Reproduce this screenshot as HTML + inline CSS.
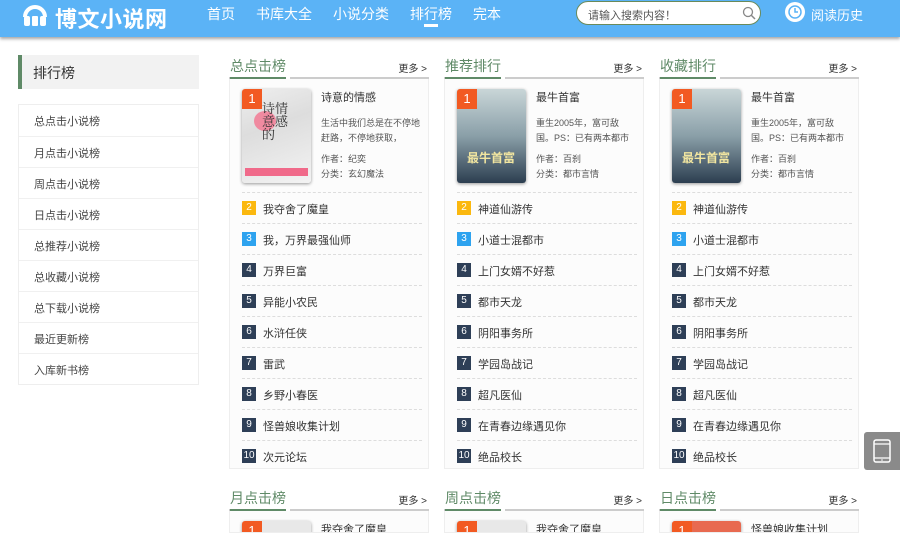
<!DOCTYPE html>
<html><head><meta charset="utf-8"><style>
*{margin:0;padding:0;box-sizing:border-box}
html,body{width:900px;height:534px;overflow:hidden}
body{background:#fff;font-family:"Liberation Sans","Noto Sans CJK SC",sans-serif;color:#333;position:relative}
.hd{position:absolute;left:0;top:0;width:900px;height:37px;background:#5bb3f6;box-shadow:0 2px 3px rgba(0,0,0,.35)}
.logo{position:absolute;left:55px;top:2px;color:#fff;font-size:22px;font-weight:bold;letter-spacing:0.5px}
.nav{position:absolute;top:4px;color:#fff;font-size:14px}
.srch{position:absolute;left:576px;top:1px;width:185px;height:24px;background:#fff;border-radius:12px;border:1px solid #6a8a5a;font-size:11px;color:#555;padding:5px 0 0 11px}
.side-t{position:absolute;left:18px;top:55px;width:181px;height:34px;background:#f2f2f2;border-left:4px solid #5f8a67;font-size:14px;padding:8px 0 0 11px}
.sl{position:absolute;left:18px;top:104px;width:181px;border:1px solid #eee}
.sl div{height:31px;border-top:1px solid #f0f0f0;font-size:11px;padding:8px 0 0 15px;color:#444}
.sl div:first-child{border-top:0}
.col{position:absolute;width:200px}
.ct{height:23px;border-bottom:2px solid #ccc;position:relative}
.ct b{font-weight:normal;font-size:14px;color:#5f8a67;position:absolute;left:1px;top:0;height:23px;border-bottom:2px solid #5f8a67;width:57px;margin-bottom:-2px}
.ct i{font-style:normal;font-size:10px;position:absolute;right:2px;top:4px;color:#333}
.ct:after{content:"";position:absolute;left:57px;bottom:-2px;width:4px;height:2px;background:#fff}
.box{border:1px solid #eee;border-top:0;background:#fcfcfc;height:390px;position:relative;overflow:hidden}
.box.s{height:22px}
.cv{position:absolute;left:12px;top:10px;width:69px;height:94px;border-radius:3px;box-shadow:0 1px 3px rgba(0,0,0,.4);overflow:hidden}
.b1{position:absolute;left:0;top:0;width:20px;height:20px;background:#f25a22;color:#fff;font-size:13px;text-align:center;line-height:20px}
.inf{position:absolute;left:91px;top:12px;font-size:9px;color:#555;line-height:15px;width:100px}
.inf .n{font-size:11px;color:#333;margin-bottom:10px}
.row{position:absolute;left:12px;width:180px;height:31px;border-top:1px dashed #ddd;font-size:11px;color:#333}
.row span{position:absolute;left:0;top:8px;width:14px;height:14px;background:#2e3f57;color:#fff;font-size:10px;text-align:center;line-height:14px}
.row em{font-style:normal;position:absolute;left:21px;top:8px}
.float{position:absolute;left:864px;top:432px;width:36px;height:38px;background:#8a8a8a;border-radius:3px 0 0 3px}
</style></head><body>
<div class="hd">
<svg style="position:absolute;left:22px;top:3px" width="26" height="24" viewBox="0 0 26 24"><path d="M3 14 A10 10 0 0 1 23 14" fill="none" stroke="#fff" stroke-width="4"/><rect x="2" y="13" width="6" height="10" rx="2" fill="#fff"/><rect x="18" y="13" width="6" height="10" rx="2" fill="#fff"/><rect x="10" y="13" width="6" height="10" rx="1" fill="#fff"/></svg>
<div class="logo">博文小说网</div>
<div class="nav" style="left:207px">首页</div>
<div class="nav" style="left:256px">书库大全</div>
<div class="nav" style="left:333px">小说分类</div>
<div class="nav" style="left:410px">排行榜</div>
<div style="position:absolute;left:424px;top:24px;width:14px;height:3px;background:#fff"></div>
<div class="nav" style="left:473px">完本</div>
<div class="srch">请输入搜索内容！<svg style="position:absolute;right:4px;top:4px" width="14" height="14"><circle cx="6" cy="6" r="4.5" fill="none" stroke="#888" stroke-width="1.3"/><path d="M9 9l4 4" stroke="#888" stroke-width="1.5"/></svg></div>
<svg style="position:absolute;left:784px;top:1px" width="22" height="22"><circle cx="11" cy="11" r="10" fill="#fff"/><circle cx="11" cy="11" r="6" fill="none" stroke="#5bb3f6" stroke-width="1.5"/><path d="M11 7v4h3" fill="none" stroke="#5bb3f6" stroke-width="1.5"/></svg>
<div class="nav" style="left:811px;font-size:13px;top:5px">阅读历史</div>
</div>
<div class="side-t">排行榜</div>
<div class="sl"><div>总点击小说榜</div><div>月点击小说榜</div><div>周点击小说榜</div><div>日点击小说榜</div><div>总推荐小说榜</div><div>总收藏小说榜</div><div>总下载小说榜</div><div>最近更新榜</div><div>入库新书榜</div></div>

<div class="col" style="left:229px;top:56px">
<div class="ct"><b>总点击榜</b><i>更多 &gt;</i></div>
<div class="box">
<div class="cv" style="background:linear-gradient(160deg,#eee,#ddd 40%,#f3f3f3);"><div style="position:absolute;left:12px;top:22px;width:22px;height:20px;border-radius:50%;background:#f08aa0"></div><div style="position:absolute;left:20px;top:12px;font-size:13px;color:#333;width:30px;line-height:13px;font-family:'Noto Serif CJK SC',serif">诗情意感的</div><div style="position:absolute;left:3px;bottom:7px;width:63px;height:8px;background:#f06a8a"></div><div class="b1">1</div></div>
<div class="inf"><div class="n">诗意的情感</div>生活中我们总是在不停地赶路，不停地获取，<div style="margin-top:6px">作者：纪奕<br>分类：玄幻魔法</div></div>
<div class="row" style="top:113px"><span style="background:#fbb80f">2</span><em>我夺舍了魔皇</em></div>
<div class="row" style="top:144px"><span style="background:#2ea3ef">3</span><em>我，万界最强仙师</em></div>
<div class="row" style="top:175px"><span>4</span><em>万界巨富</em></div>
<div class="row" style="top:206px"><span>5</span><em>异能小农民</em></div>
<div class="row" style="top:237px"><span>6</span><em>水浒任侠</em></div>
<div class="row" style="top:268px"><span>7</span><em>雷武</em></div>
<div class="row" style="top:299px"><span>8</span><em>乡野小春医</em></div>
<div class="row" style="top:330px"><span>9</span><em>怪兽娘收集计划</em></div>
<div class="row" style="top:361px"><span>10</span><em>次元论坛</em></div>
</div></div>

<div class="col" style="left:444px;top:56px">
<div class="ct"><b>推荐排行</b><i>更多 &gt;</i></div>
<div class="box">
<div class="cv" style="background:linear-gradient(180deg,#c9d6d8,#8a9fa8 50%,#2c3e50)"><div style="position:absolute;left:10px;top:60px;color:#f2e6a0;font-size:12px;font-weight:bold">最牛首富</div><div class="b1">1</div></div>
<div class="inf"><div class="n">最牛首富</div>重生2005年，富可敌国。PS：已有两本都市<div style="margin-top:6px">作者：百刹<br>分类：都市言情</div></div>
<div class="row" style="top:113px"><span style="background:#fbb80f">2</span><em>神道仙游传</em></div>
<div class="row" style="top:144px"><span style="background:#2ea3ef">3</span><em>小道士混都市</em></div>
<div class="row" style="top:175px"><span>4</span><em>上门女婿不好惹</em></div>
<div class="row" style="top:206px"><span>5</span><em>都市天龙</em></div>
<div class="row" style="top:237px"><span>6</span><em>阴阳事务所</em></div>
<div class="row" style="top:268px"><span>7</span><em>学园岛战记</em></div>
<div class="row" style="top:299px"><span>8</span><em>超凡医仙</em></div>
<div class="row" style="top:330px"><span>9</span><em>在青春边缘遇见你</em></div>
<div class="row" style="top:361px"><span>10</span><em>绝品校长</em></div>
</div></div>

<div class="col" style="left:659px;top:56px">
<div class="ct"><b>收藏排行</b><i>更多 &gt;</i></div>
<div class="box">
<div class="cv" style="background:linear-gradient(180deg,#c9d6d8,#8a9fa8 50%,#2c3e50)"><div style="position:absolute;left:10px;top:60px;color:#f2e6a0;font-size:12px;font-weight:bold">最牛首富</div><div class="b1">1</div></div>
<div class="inf"><div class="n">最牛首富</div>重生2005年，富可敌国。PS：已有两本都市<div style="margin-top:6px">作者：百刹<br>分类：都市言情</div></div>
<div class="row" style="top:113px"><span style="background:#fbb80f">2</span><em>神道仙游传</em></div>
<div class="row" style="top:144px"><span style="background:#2ea3ef">3</span><em>小道士混都市</em></div>
<div class="row" style="top:175px"><span>4</span><em>上门女婿不好惹</em></div>
<div class="row" style="top:206px"><span>5</span><em>都市天龙</em></div>
<div class="row" style="top:237px"><span>6</span><em>阴阳事务所</em></div>
<div class="row" style="top:268px"><span>7</span><em>学园岛战记</em></div>
<div class="row" style="top:299px"><span>8</span><em>超凡医仙</em></div>
<div class="row" style="top:330px"><span>9</span><em>在青春边缘遇见你</em></div>
<div class="row" style="top:361px"><span>10</span><em>绝品校长</em></div>
</div></div>

<div class="col" style="left:229px;top:488px">
<div class="ct"><b>月点击榜</b><i>更多 &gt;</i></div>
<div class="box s"><div class="cv" style="background:#e8e8e8"><div class="b1">1</div></div><div class="inf"><div class="n">我夺舍了魔皇</div></div></div></div>
<div class="col" style="left:444px;top:488px">
<div class="ct"><b>周点击榜</b><i>更多 &gt;</i></div>
<div class="box s"><div class="cv" style="background:#e8e8e8"><div class="b1">1</div></div><div class="inf"><div class="n">我夺舍了魔皇</div></div></div></div>
<div class="col" style="left:659px;top:488px">
<div class="ct"><b>日点击榜</b><i>更多 &gt;</i></div>
<div class="box s"><div class="cv" style="background:#e86a50"><div class="b1">1</div></div><div class="inf"><div class="n">怪兽娘收集计划</div></div></div></div>

<div class="float"><svg width="36" height="38"><rect x="10" y="8" width="16" height="22" rx="2" fill="none" stroke="#fff" stroke-width="1.5"/><path d="M10 12h16M10 26h16" stroke="#fff" stroke-width="1.2"/><circle cx="18" cy="28" r="0.8" fill="#fff"/></svg></div>
</body></html>
